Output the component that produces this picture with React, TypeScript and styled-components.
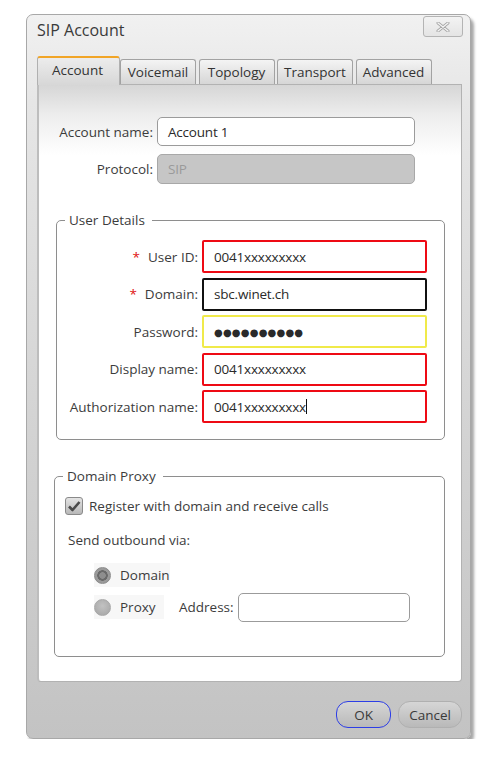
import React from 'react'
import styled, { createGlobalStyle, css } from 'styled-components'

const GlobalStyle = createGlobalStyle`
  html, body {
    margin: 0;
    padding: 0;
    background: #ffffff;
  }
  body {
    font-family: "Open Sans", "Noto Sans", "DejaVu Sans", sans-serif;
    color: #333;
  }
`

type Tone = 'plain' | 'red' | 'black' | 'yellow' | 'disabled'

const tabs = ['Account', 'Voicemail', 'Topology', 'Transport', 'Advanced']

const userRows: { label: string; value: string; tone: Tone; required?: boolean; secret?: boolean; caret?: boolean }[] = [
  { label: 'User ID:', value: '0041xxxxxxxxx', tone: 'red', required: true },
  { label: 'Domain:', value: 'sbc.winet.ch', tone: 'black', required: true },
  { label: 'Password:', value: '●●●●●●●●●●', tone: 'yellow', secret: true },
  { label: 'Display name:', value: '0041xxxxxxxxx', tone: 'red' },
  { label: 'Authorization name:', value: '0041xxxxxxxxx', tone: 'red', caret: true },
]

const App: React.FC = () => {
  return (
    <Page>
      <GlobalStyle />
      <Window>
        <TitleBar>
          <Title>SIP Account</Title>
          <CloseButton>
            <svg width="16" height="10" viewBox="0 0 16 10">
              <path d="M3 1 L13 9 M13 1 L3 9" stroke="#a4a4a4" strokeWidth="3" strokeLinecap="round" />
              <path d="M3 1 L13 9 M13 1 L3 9" stroke="#f4f4f4" strokeWidth="1.4" strokeLinecap="round" />
            </svg>
          </CloseButton>
        </TitleBar>

        <Body>
          <TabStrip>
            {tabs.map((t, i) => (
              <Tab key={t} $active={i === 0}>{t}</Tab>
            ))}
          </TabStrip>

          <Panel>
            <TopGrid>
              <Label>Account name:</Label>
              <Field $tone="plain" $h={29}>Account 1</Field>
              <Label>Protocol:</Label>
              <Field $tone="disabled" $h={30}>SIP</Field>
            </TopGrid>

            <Group $left={17}>
              <Legend>User Details</Legend>
              <UserGrid>
                {userRows.map(r => (
                  <React.Fragment key={r.label}>
                    <Label>
                      {r.required && <Star>*</Star>}
                      {r.label}
                    </Label>
                    <Field $tone={r.tone} $h={33} $secret={r.secret}>
                      {r.value}
                      {r.caret && <Caret />}
                    </Field>
                  </React.Fragment>
                ))}
              </UserGrid>
            </Group>

            <Group $left={15} $proxy>
              <Legend>Domain Proxy</Legend>
              <ProxyBody>
                <CheckRow>
                  <CheckBox>
                    <svg width="14" height="12" viewBox="0 0 14 12">
                      <path d="M2 6.5 L5.5 10 L12.5 2" stroke="#4a4a4a" strokeWidth="2.6" fill="none" strokeLinejoin="round" />
                    </svg>
                  </CheckBox>
                  <Text>Register with domain and receive calls</Text>
                </CheckRow>
                <SubHeading>Send outbound via:</SubHeading>
                <RadioRow $first>
                  <RadioLabel>
                    <Radio $checked />
                    <Text>Domain</Text>
                  </RadioLabel>
                </RadioRow>
                <RadioRow>
                  <RadioLabel $short>
                    <Radio />
                    <Text>Proxy</Text>
                  </RadioLabel>
                  <AddressLabel>Address:</AddressLabel>
                  <AddressField />
                </RadioRow>
              </ProxyBody>
            </Group>
          </Panel>

          <Footer>
            <Button $primary>OK</Button>
            <Button>Cancel</Button>
          </Footer>
        </Body>
      </Window>
    </Page>
  )
}

const Page = styled.div`
  padding: 14px 0 0 26px;
`

const Window = styled.div`
  width: 445px;
  height: 725px;
  box-sizing: border-box;
  border: 1px solid #a8a8a8;
  border-radius: 7px;
  background: linear-gradient(to bottom, #f1f1f1 0%, #e6e6e6 12%, #d2d2d2 60%, #c3c3c3 100%);
  box-shadow: 3px 4px 3px rgba(0, 0, 0, 0.35);
  display: flex;
  flex-direction: column;
`

const TitleBar = styled.div`
  height: 42px;
  display: flex;
  justify-content: space-between;
  align-items: flex-start;
  padding: 0 7px 0 10px;
`

const Title = styled.div`
  font-size: 16px;
  color: #3a3a3a;
  margin-top: 4px;
`

const CloseButton = styled.div`
  width: 40px;
  height: 21px;
  margin-top: 1px;
  box-sizing: border-box;
  border: 1px solid #b4b4b4;
  border-radius: 3px;
  background: linear-gradient(#f3f3f3, #e4e4e4);
  display: flex;
  align-items: center;
  justify-content: center;
`

const Body = styled.div`
  flex: 1;
  display: flex;
  flex-direction: column;
  padding: 0 8px 0 10px;
`

const TabStrip = styled.div`
  height: 27px;
  display: flex;
  align-items: flex-end;
  gap: 2.5px;
`

const Tab = styled.div<{ $active?: boolean }>`
  box-sizing: border-box;
  height: 25px;
  min-width: 76px;
  padding: 0 6px;
  font-size: 13.5px;
  color: #333;
  display: flex;
  align-items: center;
  justify-content: center;
  border: 1px solid #a2a2a2;
  border-bottom: none;
  border-radius: 3px 3px 0 0;
  background: linear-gradient(#f4f4f4, #d6d6d6);
  ${p => p.$active && css`
    min-width: 83px;
    padding: 0 8px 3px 6px;
    margin-right: -2.5px;
    border-top: 2px solid #f1a527;
    border-color: #f1a527 #b0b0b0 transparent #b0b0b0;
    background: linear-gradient(#ececec, #d7d7d7);
    position: relative;
    z-index: 1;
    margin-bottom: -1px;
    height: 29px;
  `}
`

const Panel = styled.div`
  height: 598px;
  box-sizing: border-box;
  border: 1px solid #b2b2b2;
  border-left: 2px solid #bdbdbd;
  border-radius: 0 0 4px 4px;
  background: linear-gradient(to bottom, #d6d6d6 0px, #ededed 30px, #ffffff 70px, #ffffff 100%);
  padding-top: 32px;
`

const TopGrid = styled.div`
  display: grid;
  grid-template-columns: 114px 258px;
  column-gap: 4px;
  row-gap: 8px;
  align-items: center;
`

const Label = styled.div`
  font-size: 13.5px;
  color: #3c3c3c;
  text-align: right;
  white-space: nowrap;
`

const Star = styled.span`
  color: #e01010;
  margin-right: 8px;
`

const toneBorder: Record<Tone, string> = {
  plain: '1px solid #9b9b9b',
  red: '2px solid #ee0a14',
  black: '2px solid #111111',
  yellow: '2px solid #f0ea4a',
  disabled: '1px solid #a8a8a8',
}

const Field = styled.div<{ $tone: Tone; $h: number; $secret?: boolean }>`
  box-sizing: border-box;
  height: ${p => p.$h}px;
  border: ${p => toneBorder[p.$tone]};
  border-radius: ${p => (p.$tone === 'plain' || p.$tone === 'disabled' ? '5px' : '2px')};
  background: ${p => (p.$tone === 'disabled' ? '#c6c6c6' : '#ffffff')};
  color: ${p => (p.$tone === 'disabled' ? '#9a9a9a' : '#2a2a2a')};
  font-size: ${p => (p.$secret ? '10px' : '13.5px')};
  letter-spacing: ${p => (p.$secret ? '0.2px' : '-0.2px')};
  padding-left: 10px;
  display: flex;
  align-items: center;
  white-space: nowrap;
`

const Caret = styled.span`
  display: inline-block;
  width: 1px;
  height: 15px;
  background: #111;
`

const Group = styled.fieldset<{ $left: number; $proxy?: boolean }>`
  margin: 27px 16px 0 ${p => p.$left}px;
  padding: ${p => (p.$proxy ? '0' : '11px 0 16px 0')};
  border: 1px solid #8e8e8e;
  border-radius: 5px;
  min-width: 0;
  ${p => p.$proxy && css`
    height: 190px;
    box-sizing: border-box;
  `}
`

const Legend = styled.legend`
  font-size: 13.5px;
  color: #3c3c3c;
  padding: 0 7px 0 4px;
  margin-left: 8px;
`

const UserGrid = styled.div`
  display: grid;
  grid-template-columns: 141px 225px;
  column-gap: 4px;
  row-gap: 4.5px;
  align-items: center;
`

const ProxyBody = styled.div`
  padding: 12px 0 0 10px;
`

const CheckRow = styled.div`
  display: flex;
  align-items: center;
  gap: 6px;
`

const CheckBox = styled.div`
  width: 18px;
  height: 18px;
  box-sizing: border-box;
  border: 1px solid #8a8a8a;
  border-radius: 3px;
  background: linear-gradient(#e4e4e4, #b8b8b8);
  display: flex;
  align-items: center;
  justify-content: center;
`

const Text = styled.span`
  font-size: 13.5px;
  color: #3c3c3c;
`

const SubHeading = styled.div`
  font-size: 13.5px;
  color: #3c3c3c;
  margin: 16px 0 0 3px;
`

const RadioRow = styled.div<{ $first?: boolean }>`
  display: flex;
  align-items: center;
  height: 32px;
  padding-left: 29px;
  margin-top: ${p => (p.$first ? '10px' : '0')};
`

const RadioLabel = styled.div<{ $short?: boolean }>`
  display: flex;
  align-items: center;
  gap: 9px;
  width: ${p => (p.$short ? '70px' : '76px')};
  background: #f7f7f7;
  padding: 3px 0;
`

const Radio = styled.span<{ $checked?: boolean }>`
  width: 17px;
  height: 17px;
  border-radius: 50%;
  box-sizing: border-box;
  background: radial-gradient(circle at 50% 40%, #c2c2c2, #a4a4a4);
  border: 1px solid #a8a8a8;
  ${p => p.$checked && css`
    background: radial-gradient(circle, #8e8e8e 0 3px, #6a6a6a 3.5px 5px, #9a9a9a 5.5px);
    border-color: #8a8a8a;
  `}
`

const AddressLabel = styled.span`
  font-size: 13.5px;
  color: #3c3c3c;
  margin-left: 15px;
  margin-right: 4px;
`

const AddressField = styled.div`
  width: 172px;
  height: 29px;
  box-sizing: border-box;
  border: 1px solid #9b9b9b;
  border-radius: 5px;
  background: #fff;
`

const Footer = styled.div`
  display: flex;
  justify-content: flex-end;
  gap: 7px;
  margin-top: 19px;
`

const Button = styled.div<{ $primary?: boolean }>`
  height: 27px;
  box-sizing: border-box;
  padding: 0 ${p => (p.$primary ? '17px' : '9px')};
  min-width: ${p => (p.$primary ? '51px' : '64px')};
  border-radius: 12px;
  border: ${p => (p.$primary ? '1.5px solid #2d3ee6' : '1px solid #b0b0b0')};
  background: linear-gradient(#d6d6d6, #b9b9b9);
  color: #3a3a3a;
  font-size: 13.5px;
  display: flex;
  align-items: center;
  justify-content: center;
`

export default App
